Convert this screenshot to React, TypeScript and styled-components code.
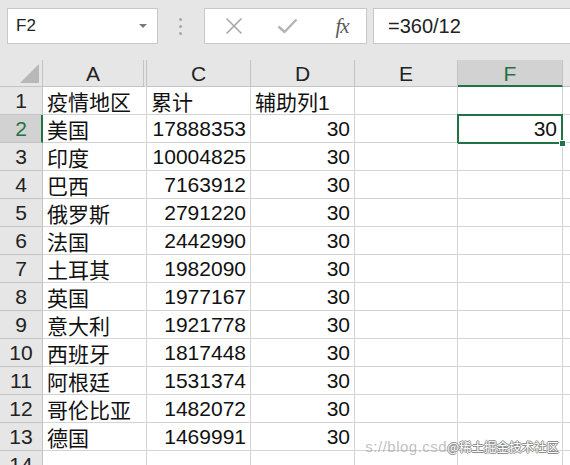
import React from 'react';
import styled, { createGlobalStyle } from 'styled-components';

// ─── Constants ───────────────────────────────────────────────────────────────

const GREEN = '#217346';
const GRID = '#d4d4d4';
const HEAD_BG = '#e6e6e6';
const HEAD_LINE = '#c4c4c4';
const ACTIVE_HEAD = '#d2d2d2';

const COLUMNS = [
  { key: 'A', width: 104 },
  { key: 'C', width: 104 },
  { key: 'D', width: 104 },
  { key: 'E', width: 103 },
  { key: 'F', width: 105 },
];

const ROWS: [string, string, string][] = [
  ['疫情地区', '累计', '辅助列1'],
  ['美国', '17888353', '30'],
  ['印度', '10004825', '30'],
  ['巴西', '7163912', '30'],
  ['俄罗斯', '2791220', '30'],
  ['法国', '2442990', '30'],
  ['土耳其', '1982090', '30'],
  ['英国', '1977167', '30'],
  ['意大利', '1921778', '30'],
  ['西班牙', '1817448', '30'],
  ['阿根廷', '1531374', '30'],
  ['哥伦比亚', '1482072', '30'],
  ['德国', '1469991', '30'],
  ['', '', ''],
];

// ─── Styled Components ───────────────────────────────────────────────────────

const GlobalStyle = createGlobalStyle`
  html, body {
    margin: 0;
    padding: 0;
    background: #fff;
    overflow: hidden;
  }
  * { box-sizing: border-box; }
`;

const Page = styled.div`
  position: relative;
  width: 570px;
  height: 465px;
  overflow: hidden;
  font-family: "Liberation Sans", "Noto Sans CJK SC", sans-serif;
  color: #1a1a1a;
`;

const TopBar = styled.div`
  height: 60px;
  background: ${HEAD_BG};
  display: flex;
  align-items: flex-start;
  padding: 8px 0 0 7px;
`;

const NameBox = styled.div`
  width: 151px;
  height: 36px;
  background: #fff;
  border: 1px solid #c8c8c8;
  display: flex;
  align-items: center;
  justify-content: space-between;
  padding: 0 10px 0 8px;
  font-size: 17px;
  color: #222;
`;

const Caret = styled.span`
  width: 0;
  height: 0;
  border-left: 4px solid transparent;
  border-right: 4px solid transparent;
  border-top: 4px solid #7a7a7a;
`;

const Dots = styled.div`
  display: flex;
  flex-direction: column;
  gap: 4px;
  margin: 10px 0 0 21px;
`;

const Dot = styled.span`
  width: 3px;
  height: 3px;
  border-radius: 50%;
  background: #a8a8a8;
`;

const FxBox = styled.div`
  width: 163px;
  height: 36px;
  margin-left: 22px;
  background: #fff;
  border: 1px solid #c8c8c8;
  display: flex;
  align-items: center;
  padding-left: 19px;
`;

const IconSlot = styled.div<{ w: number }>`
  width: ${p => p.w}px;
  display: flex;
  align-items: center;
  justify-content: center;
`;

const FxLabel = styled.span`
  font-family: "Liberation Serif", serif;
  font-style: italic;
  font-size: 21px;
  color: #5a5a5a;
  letter-spacing: -1px;
`;

const FormulaInput = styled.div`
  flex: 1;
  height: 36px;
  margin: 0 -6px 0 6px;
  background: #fff;
  border: 1px solid #c8c8c8;
  display: flex;
  align-items: center;
  padding-left: 14px;
  font-size: 20px;
  color: #222;
`;

const Grid = styled.div`
  display: grid;
  grid-template-columns: 43px ${COLUMNS.map(c => `${c.width}px`).join(' ')} 1fr;
  grid-template-rows: 27px repeat(${ROWS.length}, 28px);
  font-size: 21px;
`;

const Corner = styled.div`
  background: ${HEAD_BG};
  border-right: 1px solid ${HEAD_LINE};
  border-bottom: 1px solid ${HEAD_LINE};
  display: flex;
  align-items: flex-end;
  justify-content: flex-end;
  padding: 0 3px 3px 0;
`;

const Triangle = styled.span`
  width: 0;
  height: 0;
  border-left: 19px solid transparent;
  border-bottom: 19px solid #b8b8b8;
`;

const ColHead = styled.div<{ active?: boolean; hiddenNext?: boolean }>`
  background: ${p => (p.active ? ACTIVE_HEAD : HEAD_BG)};
  border-right: ${p => (p.hiddenNext ? `4px double ${HEAD_LINE}` : `1px solid ${HEAD_LINE}`)};
  border-bottom: ${p => (p.active ? `2px solid ${GREEN}` : `1px solid ${HEAD_LINE}`)};
  color: ${p => (p.active ? GREEN : '#222')};
  display: flex;
  align-items: center;
  justify-content: center;
  padding-top: ${p => (p.active ? 2 : 1)}px;
`;

const RowHead = styled.div<{ active?: boolean }>`
  background: ${p => (p.active ? ACTIVE_HEAD : HEAD_BG)};
  border-right: ${p => (p.active ? `2px solid ${GREEN}` : `1px solid ${HEAD_LINE}`)};
  border-bottom: 1px solid ${HEAD_LINE};
  color: ${p => (p.active ? GREEN : '#222')};
  display: flex;
  align-items: center;
  justify-content: center;
  padding-left: ${p => (p.active ? 1 : 0)}px;
`;

const Cell = styled.div<{ right?: boolean; selected?: boolean }>`
  position: relative;
  border-right: 1px solid ${GRID};
  border-bottom: 1px solid ${GRID};
  display: flex;
  align-items: center;
  justify-content: ${p => (p.right ? 'flex-end' : 'flex-start')};
  padding: 1px 4px 0 4px;
  white-space: nowrap;
  color: #111;

  ${p =>
    p.selected &&
    `
    padding-right: 5px;
    &::after {
      content: '';
      position: absolute;
      top: -1px;
      left: -1px;
      right: -1px;
      bottom: -2px;
      border: 2px solid ${GREEN};
      pointer-events: none;
    }
  `}
`;

const FillHandle = styled.span`
  position: absolute;
  right: -4px;
  bottom: -5px;
  width: 7px;
  height: 7px;
  background: ${GREEN};
  border: 1px solid #fff;
  z-index: 2;
`;

const Watermark = styled.div`
  position: absolute;
  right: 11px;
  bottom: 11px;
  display: flex;
  align-items: baseline;
  font-size: 12.5px;
  font-family: "Noto Sans CJK SC", "Liberation Sans", sans-serif;
  line-height: 1;
  pointer-events: none;
`;

const WmFaded = styled.span`
  color: rgba(150, 150, 150, 0.6);
  font-family: "Liberation Sans", sans-serif;
  font-size: 15px;
  letter-spacing: 0.5px;
`;

const WmMain = styled.span`
  color: #fff;
  text-shadow:
    1px 0 0 #8c8c8c,
    -1px 0 0 #8c8c8c,
    0 1px 0 #8c8c8c,
    0 -1px 0 #8c8c8c;
`;

// ─── Icons ───────────────────────────────────────────────────────────────────

const CancelIcon = () => (
  <svg width="18" height="18" viewBox="0 0 18 18">
    <path d="M1.5 1.5 L16.5 16.5 M16.5 1.5 L1.5 16.5" stroke="#a8a8a8" strokeWidth="1.6" fill="none" />
  </svg>
);

const EnterIcon = () => (
  <svg width="21" height="16" viewBox="0 0 21 16">
    <path d="M1.5 8.5 L7.5 14 L19.5 1.5" stroke="#b4b4b4" strokeWidth="2.4" fill="none" strokeLinejoin="round" />
  </svg>
);

// ─── Component ───────────────────────────────────────────────────────────────

const isNumeric = (v: string) => /^\d+$/.test(v);

const App: React.FC = () => {
  return (
    <Page>
      <GlobalStyle />
      <TopBar>
        <NameBox>
          <span>F2</span>
          <Caret />
        </NameBox>
        <Dots>
          <Dot />
          <Dot />
          <Dot />
        </Dots>
        <FxBox>
          <IconSlot w={19}>
            <CancelIcon />
          </IconSlot>
          <IconSlot w={33} />
          <IconSlot w={22}>
            <EnterIcon />
          </IconSlot>
          <IconSlot w={33} />
          <IconSlot w={22}>
            <FxLabel>fx</FxLabel>
          </IconSlot>
        </FxBox>
        <FormulaInput>=360/12</FormulaInput>
      </TopBar>

      <Grid>
        <Corner>
          <Triangle />
        </Corner>
        {COLUMNS.map(c => (
          <ColHead key={c.key} active={c.key === 'F'} hiddenNext={c.key === 'A'}>
            {c.key}
          </ColHead>
        ))}
        <ColHead />

        {ROWS.map((row, i) => {
          const r = i + 1;
          return (
            <React.Fragment key={r}>
              <RowHead active={r === 2}>{r}</RowHead>
              {row.map((v, j) => (
                <Cell key={j} right={isNumeric(v)}>
                  {v}
                </Cell>
              ))}
              <Cell />
              <Cell right selected={r === 2}>
                {r === 2 && (
                  <>
                    30
                    <FillHandle />
                  </>
                )}
              </Cell>
              <Cell />
            </React.Fragment>
          );
        })}
      </Grid>

      <Watermark>
        <WmFaded>s://blog.csd</WmFaded>
        <WmMain>@稀土掘金技术社区</WmMain>
      </Watermark>
    </Page>
  );
};

export default App;
